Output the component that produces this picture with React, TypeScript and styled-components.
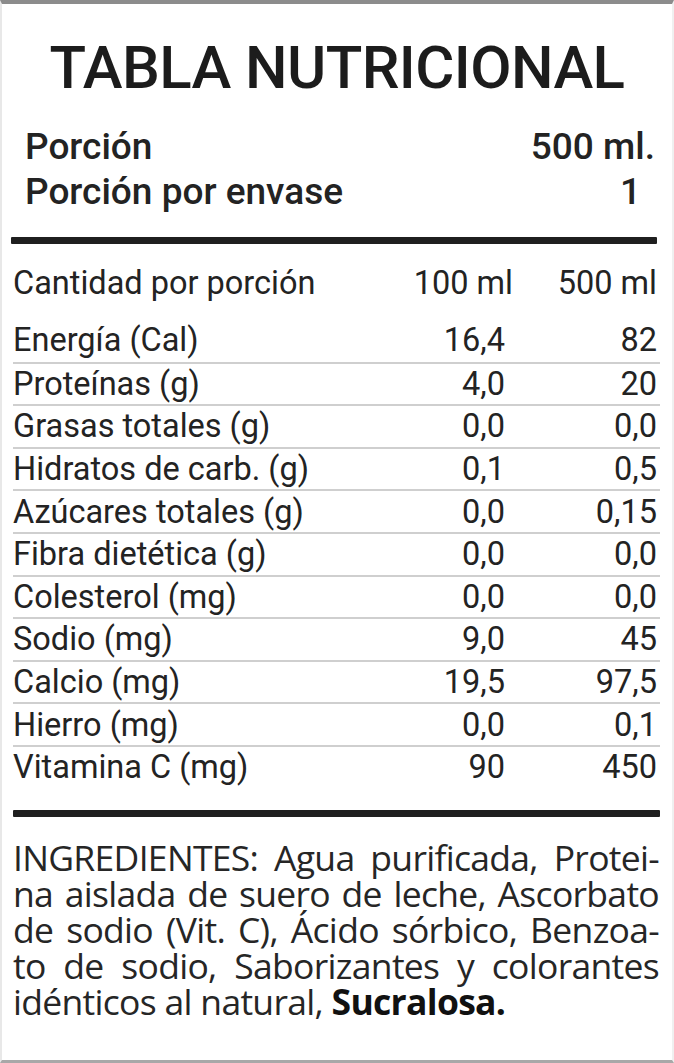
import React from "react";
import styled, { createGlobalStyle } from "styled-components";

const Global = createGlobalStyle`
  html, body { margin: 0; padding: 0; background: #ffffff; }
  body { width: 674px; height: 1063px; overflow: hidden; }
  * { box-sizing: border-box; }
`;

const Label = styled.div`
  width: 674px;
  height: 1063px;
  background: #ffffff;
  border-top: 4px solid #8c8c8c;
  border-bottom: 3px solid #a8a8a8;
  border-left: 2px solid #e8e8e8;
  border-right: 2px solid #f0f0f0;
  display: flex;
  flex-direction: column;
  color: #232323;
  font-family: Roboto, "Liberation Sans", sans-serif;
`;

const Title = styled.h1`
  margin: 29px 0 0;
  height: 70px;
  line-height: 70px;
  text-align: center;
  font-size: 60px;
  font-weight: 500;
  letter-spacing: -0.6px;
  color: #1c1c1c;
`;

const Serving = styled.div`
  margin-top: 21px;
  padding: 0 17px 0 23px;
  display: flex;
  flex-direction: column;
`;

const ServingRow = styled.div`
  height: 45px;
  display: flex;
  align-items: center;
  justify-content: space-between;
  font-size: 37px;
  font-weight: 500;
  letter-spacing: 0;
`;

const ServingValue = styled.span<{ $pad?: number }>`
  padding-right: ${(p) => p.$pad ?? 0}px;
`;

const Bar = styled.div<{ $left: number; $right: number; $top: number }>`
  height: 7px;
  margin: ${(p) => p.$top}px ${(p) => p.$right}px 0 ${(p) => p.$left}px;
  background: #1f1f1f;
  border-radius: 1px;
`;

const Table = styled.div`
  padding: 0 12px 0 11px;
  display: flex;
  flex-direction: column;
`;

const Row = styled.div<{ $head?: boolean; $line?: boolean }>`
  display: grid;
  grid-template-columns: 1fr 100px 147px;
  align-items: center;
  height: ${(p) => (p.$head ? "42px" : "42.6px")};
  margin-bottom: ${(p) => (p.$head ? "15px" : "0")};
  border-top: ${(p) => (p.$line ? "2px solid #cfcfcf" : "none")};
  font-size: 32.5px;
  font-weight: 400;
  letter-spacing: 0;
`;

const Cell = styled.span<{ $num?: boolean; $pad?: number }>`
  text-align: ${(p) => (p.$num ? "right" : "left")};
  padding-right: ${(p) => p.$pad ?? 0}px;
  white-space: nowrap;
`;

const Ingredients = styled.div`
  margin-top: 22px;
  padding: 0 13px 0 11px;
  font-family: "Open Sans", "Noto Sans", sans-serif;
  font-size: 35.5px;
  color: #262626;
  letter-spacing: -0.7px;
`;

const Line = styled.div<{ $last?: boolean }>`
  height: 36px;
  line-height: 36px;
  white-space: nowrap;
  text-align: ${(p) => (p.$last ? "left" : "justify")};
  text-align-last: ${(p) => (p.$last ? "left" : "justify")};
`;

const Strong = styled.b`
  font-weight: 700;
  color: #111;
`;

const rows: [string, string, string][] = [
  ["Energía (Cal)", "16,4", "82"],
  ["Proteínas (g)", "4,0", "20"],
  ["Grasas totales (g)", "0,0", "0,0"],
  ["Hidratos de carb. (g)", "0,1", "0,5"],
  ["Azúcares totales (g)", "0,0", "0,15"],
  ["Fibra dietética (g)", "0,0", "0,0"],
  ["Colesterol (mg)", "0,0", "0,0"],
  ["Sodio (mg)", "9,0", "45"],
  ["Calcio (mg)", "19,5", "97,5"],
  ["Hierro (mg)", "0,0", "0,1"],
  ["Vitamina C (mg)", "90", "450"],
];

export default function App() {
  return (
    <>
      <Global />
      <Label>
        <Title>TABLA NUTRICIONAL</Title>
        <Serving>
          <ServingRow>
            <span>Porción</span>
            <ServingValue>500 ml.</ServingValue>
          </ServingRow>
          <ServingRow>
            <span>Porción por envase</span>
            <ServingValue $pad={14}>1</ServingValue>
          </ServingRow>
        </Serving>
        <Bar $left={9} $right={15} $top={23} />
        <Table>
          <Row $head style={{ marginTop: 18 }}>
            <Cell>Cantidad por porción</Cell>
            <Cell $num>100 ml</Cell>
            <Cell $num $pad={3}>500 ml</Cell>
          </Row>
          {rows.map(([name, a, b], i) => (
            <Row key={name} $line={i > 0}>
              <Cell>{name}</Cell>
              <Cell $num $pad={8}>{a}</Cell>
              <Cell $num $pad={3}>{b}</Cell>
            </Row>
          ))}
        </Table>
        <Bar $left={11} $right={12} $top={22} />
        <Ingredients>
          <Line>INGREDIENTES: Agua purificada, Protei-</Line>
          <Line>na aislada de suero de leche, Ascorbato</Line>
          <Line>de sodio (Vit. C), Ácido sórbico, Benzoa-</Line>
          <Line>to de sodio, Saborizantes y colorantes</Line>
          <Line $last>
            idénticos al natural, <Strong>Sucralosa.</Strong>
          </Line>
        </Ingredients>
      </Label>
    </>
  );
}
